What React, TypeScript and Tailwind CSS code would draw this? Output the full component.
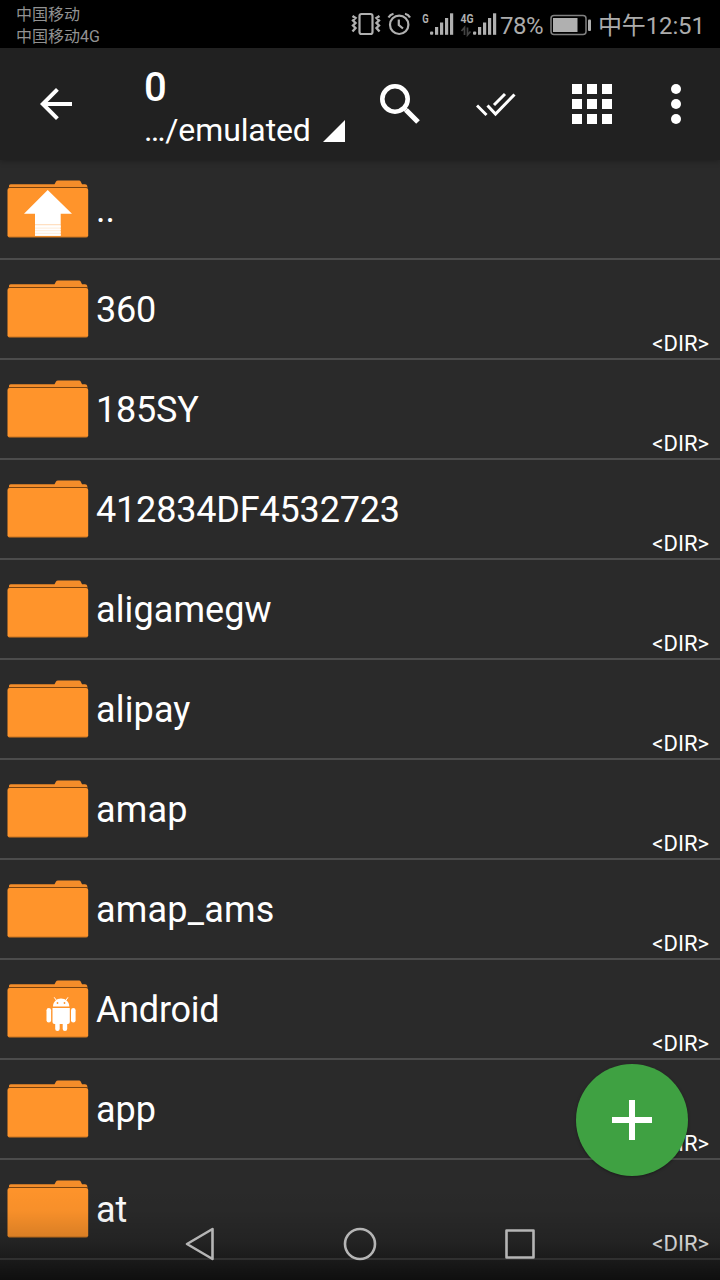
import React from "react";

type Badge = "up" | "android";
type Entry = { name: string; badge?: Badge; dir: boolean; tracking?: string };

const entries: Entry[] = [
  { name: "..", badge: "up", dir: false },
  { name: "360", dir: true, tracking: "tracking-[-0.2px]" },
  { name: "185SY", dir: true, tracking: "tracking-[-0.2px]" },
  { name: "412834DF4532723", dir: true, tracking: "tracking-[-0.18px]" },
  { name: "aligamegw", dir: true, tracking: "tracking-[0.1px]" },
  { name: "alipay", dir: true, tracking: "tracking-[0.15px]" },
  { name: "amap", dir: true, tracking: "tracking-[0.2px]" },
  { name: "amap_ams", dir: true, tracking: "tracking-[0.2px]" },
  { name: "Android", badge: "android", dir: true, tracking: "tracking-[-0.25px]" },
  { name: "app", dir: true },
  { name: "at", dir: true },
];

function FolderIcon({ badge }: { badge?: Badge }) {
  return (
    <svg className="block h-[60px] w-[82px] shrink-0" viewBox="0 0 82 60">
      <path d="M2 8V5.5Q2.5 4.200 4 4.200H47.500L49 1.500Q49.500 .6 51 .6H72Q73.200 .6 73.700 1.500L75 4.200H78Q80 4.200 80.300 6V8Z" fill="#f48d2a" />
      <path d="M1.500 6.900H80.500V8.300H1.500Z" fill="#7a4410" />
      <rect x=".5" y="8" width="80.700" height="49.300" rx="2" fill="#ff942b" />
      <path d="M1.500 56.900H80.500" stroke="#c9731d" strokeWidth=".8" />
      {badge === "up" && (
        <g fill="#fff">
          <path d="M40.700 10L65 33.700H53.700V44.500H28V33.700H17Z" />
          <path d="M28 44.500H53.700V56H28Z" fillOpacity=".85" />
          <path d="M28 45.500H53.700V47.500H28ZM28 48.700H53.700V50H28ZM28 51.300H53.700V52.700H28ZM28 53.900H53.700V55.500H28Z" />
        </g>
      )}
      {badge === "android" && (
        <g fill="#fff">
          <path d="M46 26.500C46 21.800 49.500 18.500 54 18.500S62.300 21.800 62.300 26.500Z" />
          <path d="M49.500 20.500L47.200 17.300M58.800 20.500L61 17.300" stroke="#fff" strokeWidth="1" />
          <path d="M45.500 28H62.800V42Q62.800 44 60.800 44H47.500Q45.500 44 45.500 42Z" />
          <rect x="39.500" y="28" width="4.600" height="14.500" rx="2.300" />
          <rect x="64" y="28" width="4.600" height="14.500" rx="2.300" />
          <rect x="48.200" y="40" width="4.500" height="11" rx="2.200" />
          <rect x="55.700" y="40" width="4.500" height="11" rx="2.200" />
          <circle cx="50.500" cy="23" r=".9" fill="#ff942b" />
          <circle cx="57.500" cy="23" r=".9" fill="#ff942b" />
        </g>
      )}
    </svg>
  );
}

function StatusIcons() {
  return (
    <svg className="block h-12 w-[148px] shrink-0" viewBox="350 0 148 48">
      <g fill="none" stroke="#b0b0b0" strokeWidth="2.200">
        <rect x="359.500" y="14" width="13" height="20" rx="2" />
        <path d="M352.500 16L355.500 18L353 20.500L355.500 23L353 25.500L355.500 28L352.500 31.500M379.500 16L376.500 18L379 20.500L376.500 23L379 25.500L376.500 28L379.500 31.500" strokeWidth="2.400" />
        <circle cx="399.200" cy="24.800" r="9.200" />
        <path d="M398.800 19.500V25L403 28.500" />
        <path d="M388.500 17.500Q390 14.600 393.500 13.700M410 17.500Q408.500 14.600 405 13.700" />
      </g>
      <g fill="#b0b0b0">
        <rect x="430" y="31.500" width="3.200" height="3.300" rx="1" />
        <rect x="435" y="27" width="3.200" height="7.800" />
        <rect x="440" y="22.500" width="3.200" height="12.300" />
        <rect x="445" y="18" width="3.200" height="16.800" />
        <rect x="450" y="13.300" width="3.200" height="21.500" />
        <rect x="473" y="31.500" width="3.200" height="3.300" rx="1" />
        <rect x="478" y="27" width="3.200" height="7.800" />
        <rect x="483" y="22.500" width="3.200" height="12.300" />
        <rect x="488" y="18" width="3.200" height="16.800" />
        <rect x="493" y="13.300" width="3.200" height="21.500" />
        <text x="422.300" y="22.500" fontSize="13" fontWeight="700" fontFamily="Roboto, sans-serif" textLength="6.400" lengthAdjust="spacingAndGlyphs">G</text>
        <text x="460.500" y="22.500" fontSize="13" fontWeight="700" fontFamily="Roboto, sans-serif" textLength="13" lengthAdjust="spacingAndGlyphs">4G</text>
      </g>
      <path d="M461.500 31L464.500 27.500V35M467.500 27.500V35L470.500 31.500" fill="none" stroke="#444" strokeWidth="1.700" />
    </svg>
  );
}

export default function App() {
  return (
    <div className="relative flex h-[1280px] w-[720px] flex-col overflow-hidden bg-[#2a2a2a] font-[Roboto,'Noto_Sans_CJK_SC',sans-serif] text-white">
      <div className="flex h-12 shrink-0 bg-black text-[#acacac]">
        <div className="w-[334px] pt-1 pl-4 text-[16px] leading-[22px] text-[#929292]">
          <div>中国移动</div>
          <div>中国移动4G</div>
        </div>
        <div className="flex h-12 w-[386px] items-center pl-4">
          <StatusIcons />
          <span className="w-[52px] shrink-0 pt-[3px] pl-0.5 text-[24px] leading-6 tracking-[-0.5px]">78%</span>
          <svg className="block h-12 w-[43px] shrink-0" viewBox="550 0 43 48">
            <rect x="551" y="15.500" width="35" height="19" rx="3" fill="none" stroke="#808080" strokeWidth="1.500" />
            <rect x="553" y="18" width="24.500" height="14" fill="#b0b0b0" />
            <rect x="588" y="19.500" width="3" height="11.500" rx="1" fill="#b0b0b0" />
          </svg>
          <span className="shrink-0 pt-[3px] pl-[5px] text-[24px] leading-6 tracking-[-0.15px] whitespace-nowrap">中午12:51</span>
        </div>
      </div>

      <header className="relative z-10 flex h-28 shrink-0 items-center bg-[#212121] shadow-[0_1px_6px_rgba(0,0,0,0.3)]">
        <div className="flex w-28 justify-center">
          <svg className="size-12" viewBox="0 0 24 24" fill="#fff">
            <path d="M20 11H7.830l5.590-5.590L12 4l-8 8 8 8 1.410-1.410L7.830 13H20v-2z" />
          </svg>
        </div>
        <div className="w-60 pt-[5px] pl-8">
          <div className="pt-px text-[40px] leading-[46px] font-medium">0</div>
          <div className="flex items-center text-[32px] leading-[38px]">
            <span className="w-[179px] tracking-[-0.12px] whitespace-nowrap">…/emulated</span>
            <svg className="mt-0.5 size-[22px] shrink-0" viewBox="0 0 22 22"><path d="M22 0V22H0Z" fill="#fff" /></svg>
          </div>
        </div>
        <div className="flex w-24 justify-center">
          <svg className="size-10" viewBox="0 0 40 40" fill="none" stroke="#fff">
            <circle cx="15" cy="15" r="12.700" strokeWidth="4.600" />
            <path d="M24 24L26 26" strokeWidth="4" />
            <path d="M26 26L38 38" strokeWidth="5.200" />
          </svg>
        </div>
        <div className="flex w-24 justify-center">
          <svg className="size-10" viewBox="0 0 40 40" fill="none" stroke="#fff" strokeWidth="3">
            <path d="M1 21.500L10.500 31M11.500 21.500L19.500 30L38.500 10.500M18 21L29 10" />
          </svg>
        </div>
        <div className="flex w-24 justify-center">
          <div className="grid grid-cols-3 gap-[5px]">
            {Array.from({ length: 9 }, (_, i) => <span key={i} className="size-2.5 bg-white" />)}
          </div>
        </div>
        <div className="flex w-[72px] flex-col items-center gap-[5px]">
          <span className="size-2.5 rounded-full bg-white" />
          <span className="size-2.5 rounded-full bg-white" />
          <span className="size-2.5 rounded-full bg-white" />
        </div>
      </header>

      <main className="flex flex-col">
        {entries.map((e) => (
          <div key={e.name} className="flex h-[100px] shrink-0 border-b-2 border-[#4c4c4c] pr-[11px] pl-[7px]">
            <div className="pt-5"><FolderIcon badge={e.badge} /></div>
            <span className={`flex-1 pt-[29px] pl-[7px] text-[36px] leading-[42px] ${e.tracking ?? ""}`}>{e.name}</span>
            {e.dir && <span className="self-end pb-px text-[22px] leading-[26px]">&lt;DIR&gt;</span>}
          </div>
        ))}
      </main>

      <div className="absolute right-8 bottom-[104px] z-20 flex size-28 items-center justify-center rounded-full bg-[#3fa142] shadow-[0_1px_3px_rgba(0,0,0,0.35)]">
        <svg className="size-10" viewBox="0 0 40 40"><path d="M17 0h6v17h17v6H23v17h-6V23H0v-6h17Z" fill="#fff" /></svg>
      </div>

      <nav className="absolute inset-x-0 bottom-0 z-10 flex h-24 items-end justify-center gap-[120px] bg-[linear-gradient(to_bottom,transparent_0%,rgba(0,0,0,0.03)_28%,rgba(0,0,0,0.17)_60%,rgba(0,0,0,0.4)_80%,rgba(0,0,0,0.65)_100%)] pb-4">
        <svg className="size-10" viewBox="0 0 40 40" fill="none" stroke="#b5b5b5" strokeWidth="2.600" strokeLinejoin="round"><path d="M32.500 5V35L7 20Z" /></svg>
        <svg className="size-10" viewBox="0 0 40 40" fill="none" stroke="#b5b5b5" strokeWidth="2.600"><circle cx="20" cy="20" r="15" /></svg>
        <svg className="size-10" viewBox="0 0 40 40" fill="none" stroke="#b5b5b5" strokeWidth="2.600" strokeLinejoin="round"><rect x="6.500" y="6.500" width="27" height="27" /></svg>
      </nav>
    </div>
  );
}
